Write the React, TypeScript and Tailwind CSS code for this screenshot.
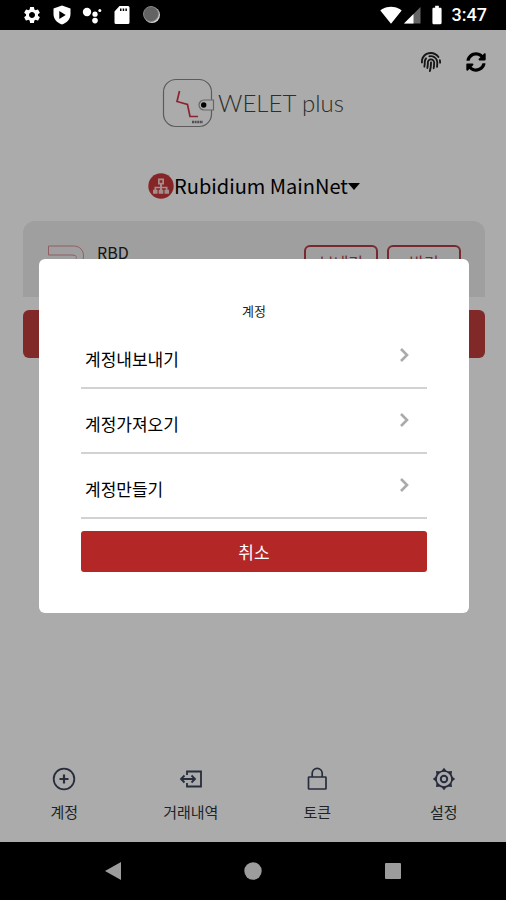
import type { ReactNode } from "react";
import { FaFingerprint, FaSyncAlt } from "react-icons/fa";
import { MdBatteryFull, MdSettings, MdSignalWifi4Bar } from "react-icons/md";

const ACCOUNT_ACTIONS = ["계정내보내기", "계정가져오기", "계정만들기"];

const TABS: { label: string; icon: ReactNode }[] = [
  { label: "계정", icon: <AccountIcon /> },
  { label: "거래내역", icon: <HistoryIcon /> },
  { label: "토큰", icon: <TokenIcon /> },
  { label: "설정", icon: <SettingsIcon /> },
];

function AccountIcon() {
  return (
    <svg viewBox="0 0 24 24" className="h-6 w-6" fill="none" stroke="currentColor" strokeWidth="1.8">
      <circle cx="12" cy="12" r="10.3" />
      <path d="M12 7.5v9M7.5 12h9" strokeWidth="2.2" />
    </svg>
  );
}

function HistoryIcon() {
  return (
    <svg viewBox="0 0 24 24" className="h-6 w-6" fill="none" stroke="currentColor" strokeWidth="1.8">
      <path d="M8 8V4.5h14v15H8V16" />
      <path d="M2 12h14M5.5 8.5 2 12l3.5 3.5M12.5 8.5 16 12l-3.5 3.5" />
    </svg>
  );
}

function TokenIcon() {
  return (
    <svg viewBox="0 0 24 24" className="h-6 w-6" fill="none" stroke="currentColor" strokeWidth="1.7">
      <rect x="3.5" y="10" width="17.5" height="12" rx="0.6" />
      <path d="M7.2 10V6.3a5 5 0 0 1 10 0V10" />
    </svg>
  );
}

function SettingsIcon() {
  return (
    <svg viewBox="0 0 24 24" className="h-6 w-6" fill="none" stroke="currentColor">
      <circle cx="12" cy="12" r="8" strokeWidth="1.6" />
      <path
        d="M12 .8l3 3.800H9zM12 23.200l3-3.800H9zM.8 12l3.800-3v6zM23.200 12l-3.800-3v6zM4 4l4.800.6-4.200 4.200zM20 4l-4.800.6 4.200 4.200zM4 20l4.800-.6-4.200-4.200zM20 20l-4.800-.6 4.200-4.200z"
        fill="currentColor"
        stroke="none"
      />
      <circle cx="12" cy="12" r="3.200" strokeWidth="2" />
    </svg>
  );
}

function StatusBar() {
  return (
    <header className="flex h-[30px] items-center justify-between bg-black pr-[19px] pl-[22px] text-white">
      <div className="flex items-center gap-[10px]">
        <MdSettings className="h-5 w-5" />
        <svg viewBox="0 0 20 20" className="h-5 w-5" fill="currentColor">
          <path fillRule="evenodd" d="M10 .5l8.5 3v5.6c0 5-3.400 8.800-8.500 10.400C4.900 17.900 1.500 14.100 1.500 9.100V3.500zM7.300 6v8l6.400-4z" />
        </svg>
        <svg viewBox="0 0 20 20" className="h-5 w-5" fill="currentColor">
          <circle cx="5" cy="7" r="4.200" />
          <circle cx="13" cy="9.200" r="2.600" />
          <circle cx="13" cy="15.600" r="2.800" />
          <circle cx="17.800" cy="5.400" r="1.500" />
        </svg>
        <svg viewBox="0 0 20 20" className="h-5 w-5" fill="currentColor">
          <path fillRule="evenodd" d="M7.500 1H16a1.500 1.500 0 0 1 1.500 1.500v15A1.500 1.500 0 0 1 16 19H4a1.500 1.500 0 0 1-1.500-1.500V6.500zM8 3.500v2.500h1.500V3.500zm2.700 0v2.500h1.500V3.500zm2.700 0v2.500h1.500V3.500z" />
        </svg>
        <svg viewBox="0 0 20 20" className="h-5 w-5">
          <circle cx="10" cy="10" r="8" fill="#d4d4d4" />
          <circle cx="9" cy="9" r="7.500" fill="#636363" stroke="#858585" />
        </svg>
      </div>
      <div className="flex items-center">
        <MdSignalWifi4Bar className="h-[22px] w-[22px]" />
        <svg viewBox="0 0 20 20" className="h-5 w-5">
          <path d="M2 18.500 18.500 2v16.500z" fill="#666" />
          <path d="M2 18.500 11.500 9v9.500z" fill="#fff" />
        </svg>
        <MdBatteryFull className="mx-1 h-[22px] w-[22px]" />
        <span className="font-[Roboto,sans-serif] text-lg leading-6 font-medium">3:47</span>
      </div>
    </header>
  );
}

function Logo() {
  return (
    <div className="mt-1 flex items-center justify-center">
      <svg viewBox="0 0 54 50" className="h-[50px] w-[54px]" fill="none">
        <path d="M49.500 22V14A12.500 12.500 0 0 0 37 1.500H14A12.500 12.500 0 0 0 1.500 14v22A12.500 12.500 0 0 0 14 48.500h23A12.500 12.500 0 0 0 49.500 36v-4" stroke="#888" strokeWidth="1.200" />
        <path d="M17.500 13 15 23.500l10.500 3 2.500 12h8" stroke="#d13348" strokeWidth="1.700" />
        <path d="M51.500 22H42a5 5 0 0 0 0 10h9.500z" stroke="#999" strokeWidth="1.200" />
        <circle cx="41.700" cy="27" r="2.700" fill="#000" />
        <path d="M30 44h11" stroke="#777" strokeWidth="2.400" strokeDasharray="2 .6" />
      </svg>
      <span className="pl-0.5 font-[Lato,sans-serif] text-2xl leading-8 font-light text-[#444]">WELET plus</span>
    </div>
  );
}

function NetworkSelector() {
  return (
    <div className="mt-[42px] flex justify-center pl-0.5">
      <button type="button" className="flex h-8 items-center text-xl text-black">
        <svg viewBox="0 0 26 26" className="h-[26px] w-[26px]" fill="none">
          <circle cx="13" cy="13" r="12.700" fill="#c8383b" />
          <path
            fill="#f3d3d3"
            fillRule="evenodd"
            d="M10 5.500h6v6h-2v2.300h5.500v3H21v4h-4.500v-4h1.300v-1.500H14v1.500h1.300v4h-4.600v-4H12v-1.500H8.200v1.500h1.300v4H5v-4h1.500v-3H12v-2.300h-2zM11.700 7.200v2.600h2.600V7.200z"
          />
        </svg>
        Rubidium MainNet
        <svg viewBox="0 0 12 7" className="h-[7px] w-3" fill="currentColor">
          <path d="M0 0h12L6 7z" />
        </svg>
      </button>
    </div>
  );
}

function BalanceCard() {
  return (
    <section className="mt-[19px] mr-[21px] ml-[23px] flex h-[76px] items-start rounded-t-xl bg-[#ededed] px-6 pt-6">
      <svg viewBox="0 0 38 38" className="h-[38px] w-[38px]" fill="none" stroke="#d98d92" strokeWidth="1">
        <path d="M1.500 1h25c6.500 0 10 4.500 10 10s-3.500 9.500-9 10l9 16H28l-10-16v-6h7c6 0 6-5 0-5H1.500z" />
      </svg>
      <span className="ml-3 flex-1 text-base leading-[14px] text-[#222]">RBD</span>
      <div className="flex gap-[9px] text-base leading-4 text-[#b23e47]">
        <button type="button" className="h-[34px] w-[74px] rounded-md border-2 border-[#b23e47]">
          보내기
        </button>
        <button type="button" className="h-[34px] w-[74px] rounded-md border-2 border-[#b23e47]">
          받기
        </button>
      </div>
    </section>
  );
}

function TabBar() {
  return (
    <nav className="mt-auto grid grid-cols-4 pb-5">
      {TABS.map((tab) => (
        <button key={tab.label} type="button" className="flex flex-col items-center gap-[11px] pl-0.5 text-[#3a435c]">
          {tab.icon}
          <span className="text-[15px] leading-5 text-[#333]">{tab.label}</span>
        </button>
      ))}
    </nav>
  );
}

function AccountDialog() {
  return (
    <div className="absolute inset-0 flex items-center justify-center bg-black/33 pr-[37px] pl-[39px]">
      <div
        role="dialog"
        aria-modal="true"
        aria-labelledby="account-title"
        className="w-full rounded-md bg-white px-[42px] pt-[42px] pb-[41px]"
      >
        <h2 id="account-title" className="mb-[3px] text-center text-[13px] leading-5 text-[#222]">
          계정
        </h2>
        <ul>
          {ACCOUNT_ACTIONS.map((label) => (
            <li key={label} className="border-b-2 border-[#d2d2d2]">
              <button type="button" className="flex w-full items-start justify-between pt-[23px] pr-4 pb-4 pl-1 text-black">
                <span className="text-[17px] leading-6">{label}</span>
                <svg viewBox="0 0 14 16" className="h-4 w-[14px]" fill="none" stroke="#aaa" strokeWidth="2.600">
                  <path d="M4 2l6 6-6 6" />
                </svg>
              </button>
            </li>
          ))}
        </ul>
        <button type="button" className="mt-3 h-[41px] w-full rounded-[3px] bg-[#b32826] text-[17px] leading-6 text-white">
          취소
        </button>
      </div>
    </div>
  );
}

function SystemNav() {
  return (
    <footer className="grid h-[58px] grid-cols-3 place-items-center bg-black px-[43px] text-[#9c9c9c]">
      <button type="button" aria-label="뒤로">
        <svg viewBox="0 0 18 18" className="h-[18px] w-[18px]" fill="currentColor">
          <path d="M1 9 17 0v18z" />
        </svg>
      </button>
      <button type="button" aria-label="홈">
        <svg viewBox="0 0 18 18" className="h-[18px] w-[18px]" fill="currentColor">
          <circle cx="9" cy="9" r="8.700" />
        </svg>
      </button>
      <button type="button" aria-label="최근 앱">
        <svg viewBox="0 0 18 18" className="h-[18px] w-[18px]" fill="currentColor">
          <rect x="1" y="1" width="16" height="16" rx="1" />
        </svg>
      </button>
    </footer>
  );
}

export default function App() {
  return (
    <div className="flex min-h-screen flex-col bg-white font-['Noto_Sans_CJK_KR',sans-serif]">
      <StatusBar />
      <main className="relative flex flex-1 flex-col">
        <div className="flex justify-end gap-[21px] pt-5 pr-[18px]">
          <button type="button" aria-label="지문 인증" className="grid h-6 w-6 place-items-center text-[#222]">
            <FaFingerprint className="h-5 w-5" />
          </button>
          <button type="button" aria-label="새로고침" className="grid h-6 w-6 place-items-center text-black">
            <FaSyncAlt className="h-5 w-5" />
          </button>
        </div>
        <Logo />
        <NetworkSelector />
        <BalanceCard />
        <div className="mt-[13px] mr-[21px] ml-[23px] h-12 rounded-md bg-[#c03e3e]" />
        <TabBar />
        <AccountDialog />
      </main>
      <SystemNav />
    </div>
  );
}
